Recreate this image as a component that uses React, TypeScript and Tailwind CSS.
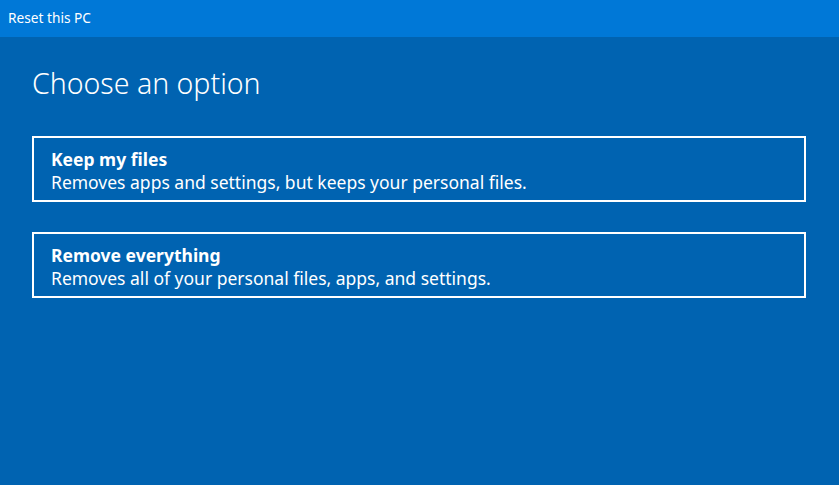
import React from "react";

const font = { fontFamily: '"Noto Sans", "Open Sans", sans-serif' };

function Option({ title, desc }: { title: string; desc: string }) {
  return (
    <div className="border-2 border-white h-[66px] pl-[17px] pt-[10px] text-white">
      <div className="text-[17.5px] font-bold leading-[22px]">{title}</div>
      <div className="text-[17.5px] leading-[24px]">{desc}</div>
    </div>
  );
}

export default function App() {
  return (
    <div className="w-[839px] h-[485px] bg-[#0063b1] flex flex-col" style={font}>
      <div className="h-[37px] bg-[#0078d7] text-white text-[13.7px] pl-[8px] flex items-center">
        Reset this PC
      </div>
      <div className="pl-[32px] pr-[33px] pt-[26px]">
        <h1 className="text-white text-[28.5px] font-light leading-[40px] mb-[33px]">Choose an option</h1>
        <div className="flex flex-col gap-[30px]">
          <Option title="Keep my files" desc="Removes apps and settings, but keeps your personal files." />
          <Option title="Remove everything" desc="Removes all of your personal files, apps, and settings." />
        </div>
      </div>
    </div>
  );
}
